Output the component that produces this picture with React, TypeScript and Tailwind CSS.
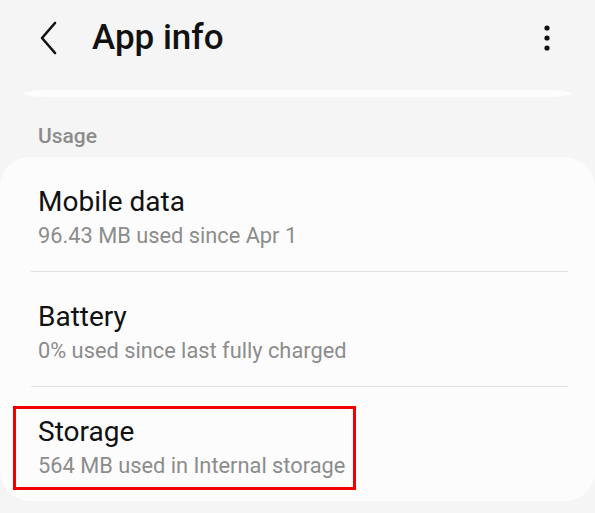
import React from "react";

interface UsageRow {
  title: string;
  detail: string;
  highlighted?: boolean;
}

const rows: UsageRow[] = [
  { title: "Mobile data", detail: "96.43 MB used since Apr 1" },
  { title: "Battery", detail: "0% used since last fully charged" },
  { title: "Storage", detail: "564 MB used in Internal storage", highlighted: true },
];

function BackIcon() {
  return (
    <svg width="20" height="34" viewBox="0 0 20 34" fill="none">
      <path d="M16 2 L3 17 L16 32" stroke="#111" strokeWidth="2.6" strokeLinecap="round" strokeLinejoin="round" />
    </svg>
  );
}

function MoreIcon() {
  return (
    <svg width="10" height="30" viewBox="0 0 10 30">
      <circle cx="5" cy="5" r="2.6" fill="#111" />
      <circle cx="5" cy="15" r="2.6" fill="#111" />
      <circle cx="5" cy="25" r="2.6" fill="#111" />
    </svg>
  );
}

export default function App() {
  return (
    <div
      className="w-[595px] h-[513px] overflow-hidden bg-[#f5f5f5]"
      style={{ fontFamily: "Roboto, 'Noto Sans', sans-serif" }}
    >
      {/* Header */}
      <div className="h-[76px] flex items-center">
        <div className="w-[92px] flex items-center pl-[39px]">
          <BackIcon />
        </div>
        <h1 className="text-[35px] leading-[40px] font-medium text-[#111]">App info</h1>
        <div className="ml-auto pr-[43px] flex items-center">
          <MoreIcon />
        </div>
      </div>

      {/* bottom edge of previous card */}
      <div className="mt-[14px] mx-[23px] h-[7px] rounded-[30px/3.5px] bg-[#fdfdfd]" />

      {/* Section label */}
      <div className="mt-[27px] mb-[9px] pl-[38px] text-[21px] leading-[24px] font-medium text-[#8c8c8c]">
        Usage
      </div>

      {/* Card */}
      <div className="w-full rounded-[30px] bg-[#fcfcfc] flex flex-col">
        {rows.map((row, i) => (
          <React.Fragment key={row.title}>
            {i > 0 && <div className="ml-[31px] mr-[27px] h-px bg-[#e3e3e3]" />}
            <div className="relative pl-[38px] pt-[28px] pb-[21px]">
              <div className="text-[28px] leading-[34px] text-[#111]">{row.title}</div>
              <div className="mt-[3px] text-[21.8px] leading-[28px] text-[#8c8c8c]">{row.detail}</div>
              {row.highlighted && (
                <div className="absolute left-[13px] top-[19px] w-[343px] h-[84px] border-[3px] border-[#f00000]" />
              )}
            </div>
          </React.Fragment>
        ))}
      </div>
    </div>
  );
}
